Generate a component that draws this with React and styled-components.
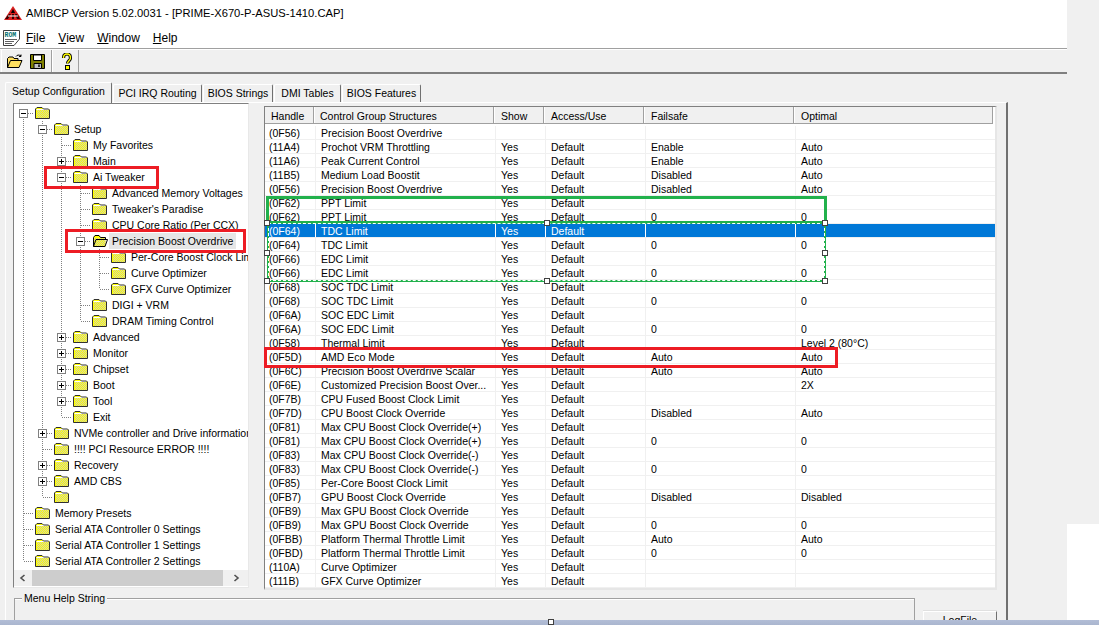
import React from 'react'
import styled, { createGlobalStyle } from 'styled-components'

const Global = createGlobalStyle`
html, body { margin: 0; padding: 0; background: #f0f0f0; }
body { font-family: "Liberation Sans", Arial, sans-serif; font-size: 10.5px; color: #000; overflow: hidden; }
* { box-sizing: border-box; }
`

const Page = styled.div`
position: relative;
width: 1099px;
height: 625px;
overflow: hidden;
display: flex;
flex-direction: column;
`
const Upper = styled.div`
flex: none;
height: 620px;
display: flex;
`
const Win = styled.div`
width: 1067px;
height: 620px;
display: flex;
flex-direction: column;
`
const Side = styled.div`
flex: 1;
display: flex;
flex-direction: column;
justify-content: flex-end;
`
const SideWhite = styled.div`
height: 96px;
background: #fff;
`
const Strip = styled.div`
flex: none;
height: 5px;
background: linear-gradient(#b2bdd6, #aab6cf);
`
const TitleBar = styled.div`
flex: none;
height: 26px;
background: #fff;
display: flex;
align-items: center;
gap: 4px;
padding-left: 4px;
font-size: 11.2px;
`
const MenuBar = styled.div`
flex: none;
height: 23px;
padding-top: 1px;
background: #fff;
border-bottom: 1px solid #a0a0a0;
display: flex;
align-items: center;
padding-left: 3px;
font-size: 12px;
`
const MenuItem = styled.span`
margin-left: ${p => p.$gap}px;
`
const Toolbar = styled.div`
flex: none;
height: 25px;
border-top: 1px solid #fff;
border-bottom: 2px solid #808080;
display: flex;
align-items: center;
padding-left: 1px;
`
const ToolGroup = styled.div`
width: ${p => p.$w}px;
height: 22px;
border-left: 1px solid #fff;
border-right: 1px solid #a0a0a0;
display: flex;
align-items: center;
gap: 7px;
padding-left: ${p => p.$pad}px;
`
const TabStrip = styled.div`
flex: none;
height: 28px;
padding-left: 5px;
display: flex;
align-items: flex-end;
gap: 1px;
`
const Tab = styled.div`
width: ${p => p.$w}px;
height: ${p => (p.$on ? 21 : 18)}px;
padding-top: 1px;
margin-bottom: ${p => (p.$on ? -1 : 0)}px;
text-align: center;
line-height: 14px;
white-space: nowrap;
border-top: 1px solid #fff;
border-left: 1px solid #fff;
border-right: 1px solid #707070;
border-radius: 2px 2px 0 0;
background: #f0f0f0;
position: relative;
`
const TabPage = styled.div`
flex: 1;
min-height: 0;
width: 1003px;
margin-left: 5px;
border-top: 1px solid #fff;
border-left: 1px solid #fff;
border-right: 2px solid #707070;
padding-left: 7px;
display: flex;
flex-direction: column;
`
const Panels = styled.div`
flex: none;
display: flex;
align-items: flex-start;
gap: 15px;
`
const TreePanel = styled.div`
width: 236px;
height: 485px;
border-top: 1px solid #808080;
border-left: 1px solid #808080;
border-right: 1px solid #e8e8e8;
border-bottom: 1px solid #e8e8e8;
background: #fff;
display: flex;
flex-direction: column;
overflow: hidden;
`
const TreeRows = styled.div`
height: 466px;
padding-top: 1px;
overflow: hidden;
`
const TreeRow = styled.div`
height: 16px;
display: flex;
white-space: nowrap;
`
const Guide = styled.div`
flex: none;
width: 19px;
height: 16px;
${p => p.$line && 'background: repeating-linear-gradient(#808080 0 1px, transparent 1px 2px) 9px 0 / 1px 16px no-repeat;'}
`
const Elbow = styled.div`
flex: none;
width: 19px;
height: 16px;
position: relative;
&::before {
  content: '';
  position: absolute;
  left: 9px;
  top: ${p => (p.$top ? 8 : 0)}px;
  width: 1px;
  height: ${p => (p.$more ? (p.$top ? 8 : 16) : 8)}px;
  background: repeating-linear-gradient(#808080 0 1px, transparent 1px 2px);
}
&::after {
  content: '';
  position: absolute;
  left: 10px;
  top: 8px;
  width: 9px;
  height: 1px;
  background: repeating-linear-gradient(90deg, #808080 0 1px, transparent 1px 2px);
}
`
const Expander = styled.div`
position: absolute;
z-index: 1;
left: 5px;
top: 4px;
width: 9px;
height: 9px;
border: 1px solid #808080;
background: #fff;
&::before {
  content: '';
  position: absolute;
  left: 1px;
  top: 3px;
  width: 5px;
  height: 1px;
  background: #000;
}
&::after {
  content: '';
  display: ${p => (p.$plus ? 'block' : 'none')};
  position: absolute;
  left: 3px;
  top: 1px;
  width: 1px;
  height: 5px;
  background: #000;
}
`
const IconCell = styled.div`
flex: none;
width: 19px;
padding: 1px 0 0 2px;
`
const TreeLabel = styled.span`
height: 16px;
line-height: 17px;
padding: 0 3px;
background: ${p => (p.$on ? '#e6e6e6' : 'transparent')};
`
const HScroll = styled.div`
flex: none;
height: 16px;
background: #f0f0f0;
display: flex;
align-items: center;
`
const ScrollBtn = styled.div`
flex: ${p => (p.$grow ? 1 : 'none')};
width: 18px;
display: flex;
justify-content: center;
align-items: center;
height: 16px;
`
const ScrollThumb = styled.div`
width: 191px;
height: 16px;
background: #cdcdcd;
`
const TablePanel = styled.div`
width: 733px;
height: 484px;
margin-top: 3px;
border-top: 1px solid #808080;
border-left: 1px solid #808080;
border-right: 2px solid #e6e6e6;
border-bottom: 2px solid #e6e6e6;
background: #fff;
overflow: hidden;
`
const Header = styled.div`
height: 17px;
margin-bottom: 2px;
display: grid;
grid-template-columns: 49px 180px 50px 100px 150px 199px;
background: #f0f0f0;
border-bottom: 1px solid #a0a0a0;
width: 728px;
`
const HeaderCell = styled.div`
padding-left: ${p => p.$pad}px;
line-height: 19px;
height: 16px;
overflow: hidden;
border-right: 1px solid #a0a0a0;
box-shadow: 1px 0 0 #fff;
`
const Row = styled.div`
height: 14px;
display: grid;
grid-template-columns: 50px 180px 50px 100px 150px 1fr;
border-bottom: 1px solid #f0f0f0;
background: ${p => (p.$on ? '#0078d7' : '#fff')};
color: ${p => (p.$on ? '#fff' : '#000')};
`
const Cell = styled.div`
padding-left: ${p => (p.$first ? 4 : 5)}px;
line-height: 15px;
height: 13px;
white-space: nowrap;
overflow: hidden;
border-left: ${p => (p.$first ? 'none' : `1px solid ${p.$on ? '#fff' : '#f0f0f0'}`)};
`
const HelpRow = styled.div`
flex: 1;
min-height: 0;
display: flex;
align-items: flex-start;
gap: 8px;
padding: 8px 0 0 1px;
overflow: hidden;
`
const HelpBox = styled.div`
position: relative;
flex: none;
width: 901px;
height: 30px;
border-top: 1px solid #a0a0a0;
border-left: 1px solid #a0a0a0;
border-right: 1px solid #a0a0a0;
box-shadow: inset 0 1px 0 #fff;
`
const Legend = styled.span`
position: absolute;
left: 7px;
top: -8px;
padding: 0 2px;
background: #f0f0f0;
line-height: 14px;
`
const FileButton = styled.div`
flex: none;
width: 74px;
height: 24px;
margin-top: 13px;
text-align: center;
line-height: 14px;
padding-top: 1px;
border-top: 1px solid #fff;
border-left: 1px solid #fff;
border-right: 1px solid #707070;
box-shadow: 0 -1px 0 #e0e0e0;
`
const Mark = styled.div`
position: absolute;
left: ${p => p.$x}px;
top: ${p => p.$y}px;
width: ${p => p.$w}px;
height: ${p => p.$h}px;
border: ${p => p.$b}px solid ${p => p.$c};
pointer-events: none;
`
const DashMark = styled(Mark)`
&::after {
  content: '';
  position: absolute;
  inset: -1px;
  border: 1px dashed #fff;
}
`
const Handle = styled.div`
position: absolute;
left: ${p => p.$x - 3}px;
top: ${p => p.$y - 3}px;
width: 6px;
height: 6px;
background: #fff;
border: 1px solid #404040;
`

// checker dither for the folder body
let dither = ''
for (let y = 4; y < 12; y++) {
  for (let x = 2; x < 14; x++) {
    if ((x + y) % 2 === 0) dither += `M${x} ${y}h1v1h-1z`
  }
}

const Folder = ({ open }) => (
  <svg width="16" height="14" viewBox="0 0 16 14" style={{ display: 'block' }}>
    {open ? (
      <>
        <path d="M1.5 12.5V3.5L3 1.5H7L8.5 3.5H13.5V12.5Z" fill="#ffff00" />
        <path d={dither} fill="#d0d0b0" />
        <path d="M1.5 12.5V3.5L3 1.5H7L8.5 3.5H13.5V5.5M1.5 12.5H13L15.5 5.5H4L1.5 12.5" fill="none" stroke="#000" />
      </>
    ) : (
      <>
        <path d="M.5 12.5V3L2 1.5H7L8.5 3H13.5L14.5 4V12.5Z" fill="#ffff00" />
        <path d={dither} fill="#d0d0b0" />
        <path d="M1.5 3.5H13.5" stroke="#fff" />
        <path d="M.5 12.5V3L2 1.5H7L8.5 3H13.5L14.5 4V12.5Z" fill="none" stroke="#303030" />
      </>
    )}
  </svg>
)

const AmiLogo = () => (
  <svg width="18" height="15" viewBox="0 0 18 15" style={{ display: 'block' }}>
    <path d="M9 0L18 14H0Z" fill="#d81e1e" />
    <path d="M9 3L7 7H11Z" fill="#000" />
    <path d="M1 13L5 8H7L4 13ZM8 8H10V13H8ZM11 8H13L16 13H13Z" fill="#300" />
    <path d="M4 10H14" stroke="#fff" strokeWidth="1" />
  </svg>
)

const RomIcon = () => (
  <svg width="17" height="16" viewBox="0 0 17 16" style={{ display: 'block' }}>
    <path d="M.5.5H16.5V9L11 15.5H.5Z" fill="#fff" stroke="#404040" />
    <text x="1.5" y="7" fontSize="6.5" fontWeight="bold" fill="#007070" fontFamily="Liberation Mono, monospace">ROM</text>
    <path d="M2 9.5H14M2 11.5H11M2 13.5H9" stroke="#606060" />
  </svg>
)

const OpenIcon = () => (
  <svg width="16" height="15" viewBox="0 0 16 15" style={{ display: 'block' }}>
    <path d="M.5 13.5V4.5L2 3H6L7 4.5H11V6.5H15L12 13.5Z" fill="#ffe060" stroke="#000" />
    <path d="M.5 13.5L3.5 6.5H15" fill="none" stroke="#000" />
    <path d="M9 2.5C10 .8 12 .6 14 2M14 .5V2.5H12" fill="none" stroke="#000" />
  </svg>
)

const SaveIcon = () => (
  <svg width="15" height="15" viewBox="0 0 15 15" style={{ display: 'block' }}>
    <path d="M.5.5H14.5V14.5H.5Z" fill="#808000" stroke="#000" />
    <path d="M3.5 1H11.5V6.5H3.5Z" fill="#fff" stroke="#000" />
    <path d="M4 9.5H11.5V14.5H4Z" fill="#c0c0c0" stroke="#000" />
    <path d="M9 10.5V13" stroke="#000" strokeWidth="1.5" />
  </svg>
)

const HelpIcon = () => (
  <svg width="14" height="17" viewBox="0 0 14 17" style={{ display: 'block' }}>
    <path d="M3.5 5C3.5 2.5 5 1 7 1s3.5 1.5 3.5 4c0 2.5-3 3-3 5.5" fill="none" stroke="#000" strokeWidth="3.2" />
    <path d="M3.5 5C3.5 2.5 5 1 7 1s3.5 1.5 3.5 4c0 2.5-3 3-3 5.5" fill="none" stroke="#ffff00" strokeWidth="1.4" />
    <rect x="5.5" y="12.5" width="4" height="4" fill="#ffff00" stroke="#000" />
  </svg>
)

const Chevron = ({ d }) => (
  <svg width="8" height="8" viewBox="0 0 8 8" style={{ display: 'block' }}>
    <path d={d} fill="none" stroke="#505050" strokeWidth="1.6" />
  </svg>
)

// depth, label, expander ('+', '-' or nothing)
const treeItems = [
  [0, '', '-'],
  [1, 'Setup', '-'],
  [2, 'My Favorites'],
  [2, 'Main', '+'],
  [2, 'Ai Tweaker', '-'],
  [3, 'Advanced Memory Voltages'],
  [3, "Tweaker's Paradise"],
  [3, 'CPU Core Ratio (Per CCX)'],
  [3, 'Precision Boost Overdrive', '-', true],
  [4, 'Per-Core Boost Clock Limit'],
  [4, 'Curve Optimizer'],
  [4, 'GFX Curve Optimizer'],
  [3, 'DIGI + VRM'],
  [3, 'DRAM Timing Control'],
  [2, 'Advanced', '+'],
  [2, 'Monitor', '+'],
  [2, 'Chipset', '+'],
  [2, 'Boot', '+'],
  [2, 'Tool', '+'],
  [2, 'Exit'],
  [1, 'NVMe controller and Drive information', '+'],
  [1, '!!!! PCI Resource ERROR !!!!'],
  [1, 'Recovery', '+'],
  [1, 'AMD CBS', '+'],
  [1, ''],
  [0, 'Memory Presets'],
  [0, 'Serial ATA Controller 0 Settings'],
  [0, 'Serial ATA Controller 1 Settings'],
  [0, 'Serial ATA Controller 2 Settings'],
]

// is there a later sibling at this level below row i
const hasNext = (i, level) => {
  for (let k = i + 1; k < treeItems.length; k++) {
    if (treeItems[k][0] < level) return false
    if (treeItems[k][0] === level) return true
  }
  return false
}

const Y = 'Yes'
const D = 'Default'
const rows = [
  ['(0F56)', 'Precision Boost Overdrive', '', '', '', ''],
  ['(11A4)', 'Prochot VRM Throttling', Y, D, 'Enable', 'Auto'],
  ['(11A6)', 'Peak Current Control', Y, D, 'Enable', 'Auto'],
  ['(11B5)', 'Medium Load Boostit', Y, D, 'Disabled', 'Auto'],
  ['(0F56)', 'Precision Boost Overdrive', Y, D, 'Disabled', 'Auto'],
  ['(0F62)', 'PPT Limit', Y, D, '', ''],
  ['(0F62)', 'PPT Limit', Y, D, '0', '0'],
  ['(0F64)', 'TDC Limit', Y, D, '', ''],
  ['(0F64)', 'TDC Limit', Y, D, '0', '0'],
  ['(0F66)', 'EDC Limit', Y, D, '', ''],
  ['(0F66)', 'EDC Limit', Y, D, '0', '0'],
  ['(0F68)', 'SOC TDC Limit', Y, D, '', ''],
  ['(0F68)', 'SOC TDC Limit', Y, D, '0', '0'],
  ['(0F6A)', 'SOC EDC Limit', Y, D, '', ''],
  ['(0F6A)', 'SOC EDC Limit', Y, D, '0', '0'],
  ['(0F58)', 'Thermal Limit', Y, D, '', 'Level 2 (80°C)'],
  ['(0F5D)', 'AMD Eco Mode', Y, D, 'Auto', 'Auto'],
  ['(0F6C)', 'Precision Boost Overdrive Scalar', Y, D, 'Auto', 'Auto'],
  ['(0F6E)', 'Customized Precision Boost Over...', Y, D, '', '2X'],
  ['(0F7B)', 'CPU Fused Boost Clock Limit', Y, D, '', ''],
  ['(0F7D)', 'CPU Boost Clock Override', Y, D, 'Disabled', 'Auto'],
  ['(0F81)', 'Max CPU Boost Clock Override(+)', Y, D, '', ''],
  ['(0F81)', 'Max CPU Boost Clock Override(+)', Y, D, '0', '0'],
  ['(0F83)', 'Max CPU Boost Clock Override(-)', Y, D, '', ''],
  ['(0F83)', 'Max CPU Boost Clock Override(-)', Y, D, '0', '0'],
  ['(0F85)', 'Per-Core Boost Clock Limit', Y, D, '', ''],
  ['(0FB7)', 'GPU Boost Clock Override', Y, D, 'Disabled', 'Disabled'],
  ['(0FB9)', 'Max GPU Boost Clock Override', Y, D, '', ''],
  ['(0FB9)', 'Max GPU Boost Clock Override', Y, D, '0', '0'],
  ['(0FBB)', 'Platform Thermal Throttle Limit', Y, D, 'Auto', 'Auto'],
  ['(0FBD)', 'Platform Thermal Throttle Limit', Y, D, '0', '0'],
  ['(110A)', 'Curve Optimizer', Y, D, '', ''],
  ['(111B)', 'GFX Curve Optimizer', Y, D, '', ''],
]

const columns = [['Handle', 6], ['Control Group Structures', 6], ['Show', 7], ['Access/Use', 7], ['Failsafe', 7], ['Optimal', 7]]
const tabs = [['Setup Configuration', 107, true], ['PCI IRQ Routing', 89], ['BIOS Strings', 70], ['DMI Tables', 67], ['BIOS Features', 79]]
const handles = [[267, 223], [547, 223], [825, 223], [267, 253], [825, 253], [267, 281], [547, 281], [825, 281], [551, 622]]

const App = () => {
  return (
    <Page>
      <Global />
      <Upper>
        <Win>
          <TitleBar>
            <AmiLogo />
            <span>AMIBCP Version 5.02.0031 - [PRIME-X670-P-ASUS-1410.CAP]</span>
          </TitleBar>
          <MenuBar>
            <RomIcon />
            <MenuItem $gap={6}><u>F</u>ile</MenuItem>
            <MenuItem $gap={13}><u>V</u>iew</MenuItem>
            <MenuItem $gap={13}><u>W</u>indow</MenuItem>
            <MenuItem $gap={13}><u>H</u>elp</MenuItem>
          </MenuBar>
          <Toolbar>
            <ToolGroup $w={51} $pad={5}><OpenIcon /><SaveIcon /></ToolGroup>
            <ToolGroup $w={27} $pad={7}><HelpIcon /></ToolGroup>
          </Toolbar>
          <TabStrip>
            {tabs.map(([name, w, on]) => <Tab key={name} $w={w} $on={on}>{name}</Tab>)}
          </TabStrip>
          <TabPage>
            <Panels>
              <TreePanel>
                <TreeRows>
                  {treeItems.map(([depth, label, exp, on], i) => (
                    <TreeRow key={i}>
                      {Array.from({ length: depth }).map((_, l) => (
                        <Guide key={l} $line={hasNext(i, l)} />
                      ))}
                      <Elbow $more={hasNext(i, depth)} $top={i === 0}>
                        {exp && <Expander $plus={exp === '+'} />}
                      </Elbow>
                      <IconCell><Folder open={on} /></IconCell>
                      {label && <TreeLabel $on={on}>{label}</TreeLabel>}
                    </TreeRow>
                  ))}
                </TreeRows>
                <HScroll>
                  <ScrollBtn><Chevron d="M5.5 1L2 4L5.5 7" /></ScrollBtn>
                  <ScrollThumb />
                  <ScrollBtn $grow><Chevron d="M2.5 1L6 4L2.5 7" /></ScrollBtn>
                </HScroll>
              </TreePanel>
              <TablePanel>
                <Header>
                  {columns.map(([name, pad]) => <HeaderCell key={name} $pad={pad}>{name}</HeaderCell>)}
                </Header>
                {rows.map((r, i) => (
                  <Row key={i} $on={i === 7}>
                    {r.map((c, k) => <Cell key={k} $first={k === 0} $on={i === 7}>{c}</Cell>)}
                  </Row>
                ))}
              </TablePanel>
            </Panels>
            <HelpRow>
              <HelpBox><Legend>Menu Help String</Legend></HelpBox>
              <FileButton>LogFile</FileButton>
            </HelpRow>
          </TabPage>
        </Win>
        <Side><SideWhite /></Side>
      </Upper>
      <Strip />

      <Mark $x={44} $y={166} $w={115} $h={23} $b={3} $c="#ed1c24" />
      <Mark $x={65} $y={229} $w={181} $h={24} $b={3} $c="#ed1c24" />
      <Mark $x={264} $y={347} $w={574} $h={21} $b={3} $c="#ed1c24" />
      <Mark $x={266} $y={196} $w={561} $h={28} $b={3} $c="#22b14c" />
      <DashMark $x={267} $y={222} $w={559} $h={60} $b={2} $c="#22b14c" />
      {handles.map(([x, y]) => <Handle key={x + '-' + y} $x={x} $y={y} />)}
    </Page>
  )
}

export default App
